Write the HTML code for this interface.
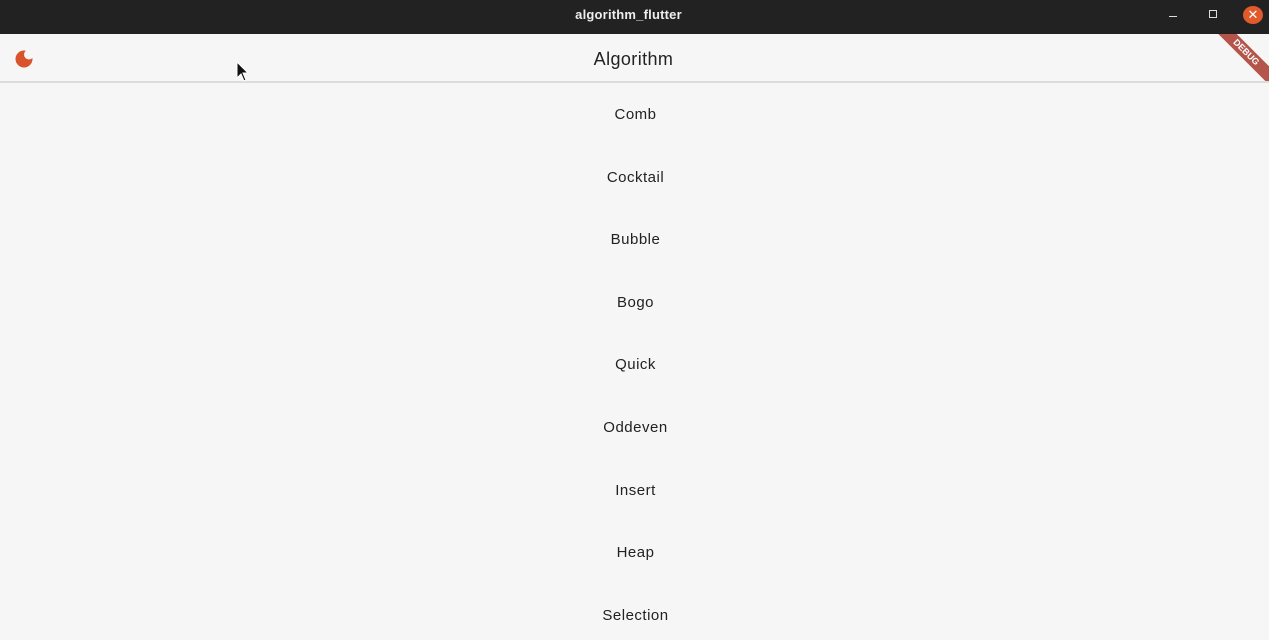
<!DOCTYPE html>
<html><head><style>
body{margin:0;width:1269px;height:640px;overflow:hidden;background:#f6f6f6;font-family:"Liberation Sans",sans-serif;position:relative}
.tb{position:absolute;left:0;top:0;width:1269px;height:34px;background:#222}
.tb .t{position:absolute;width:100%;text-align:center;top:7px;color:#eee;font-weight:bold;font-size:13px;letter-spacing:0.2px;left:-6px}
.ab{position:absolute;top:34px;left:0;width:1269px;height:47px;background:#f6f6f6;border-bottom:2px solid #dcdcdc;overflow:hidden}
.ab .t{position:absolute;width:100%;text-align:center;top:15px;font-size:18px;color:#222;letter-spacing:0.4px;left:-1px}
.it{position:absolute;width:100%;text-align:center;font-size:15px;color:#222;letter-spacing:0.5px;left:1px}
.dbg{position:absolute;left:1206px;top:12px;width:80px;height:13px;background:#b4544a;transform:rotate(45deg);transform-origin:center;color:#fff;font-size:9px;font-weight:bold;text-align:center;line-height:13px}
</style></head><body>
<div class="tb"><div class="t">algorithm_flutter</div>
<div style="position:absolute;left:1169px;top:16px;width:8px;height:1px;background:#ddd"></div>
<div style="position:absolute;left:1209px;top:10px;width:6px;height:6px;border:1.5px solid #ddd"></div>
<div style="position:absolute;left:1243px;top:6px;width:20px;height:18px;border-radius:50%;background:#e05a2b;color:#fff;font-size:13px;text-align:center;line-height:18px">✕</div>
</div>
<div class="ab"><div class="t">Algorithm</div>
<svg style="position:absolute;left:14px;top:16px" width="20" height="18" viewBox="0 0 20 18">
<mask id="m"><rect width="20" height="18" fill="#fff"/><circle cx="15" cy="4.5" r="5" fill="#000"/></mask>
<circle cx="10" cy="9" r="8.5" fill="#d9542a" mask="url(#m)"/></svg>
<div class="dbg">DEBUG</div>
</div>
<svg style="position:absolute;left:236px;top:61px" width="14" height="22" viewBox="0 0 14 22"><path d="M1 1 L1 17 L5 13 L8 20 L10 19 L7 12 L12 12 Z" fill="#111" stroke="#fff" stroke-width="1"/></svg>
<div class="it" style="top:106px">Comb</div>
<div class="it" style="top:169px">Cocktail</div>
<div class="it" style="top:231px">Bubble</div>
<div class="it" style="top:294px">Bogo</div>
<div class="it" style="top:356px">Quick</div>
<div class="it" style="top:419px">Oddeven</div>
<div class="it" style="top:482px">Insert</div>
<div class="it" style="top:544px">Heap</div>
<div class="it" style="top:607px">Selection</div>
</body></html>
